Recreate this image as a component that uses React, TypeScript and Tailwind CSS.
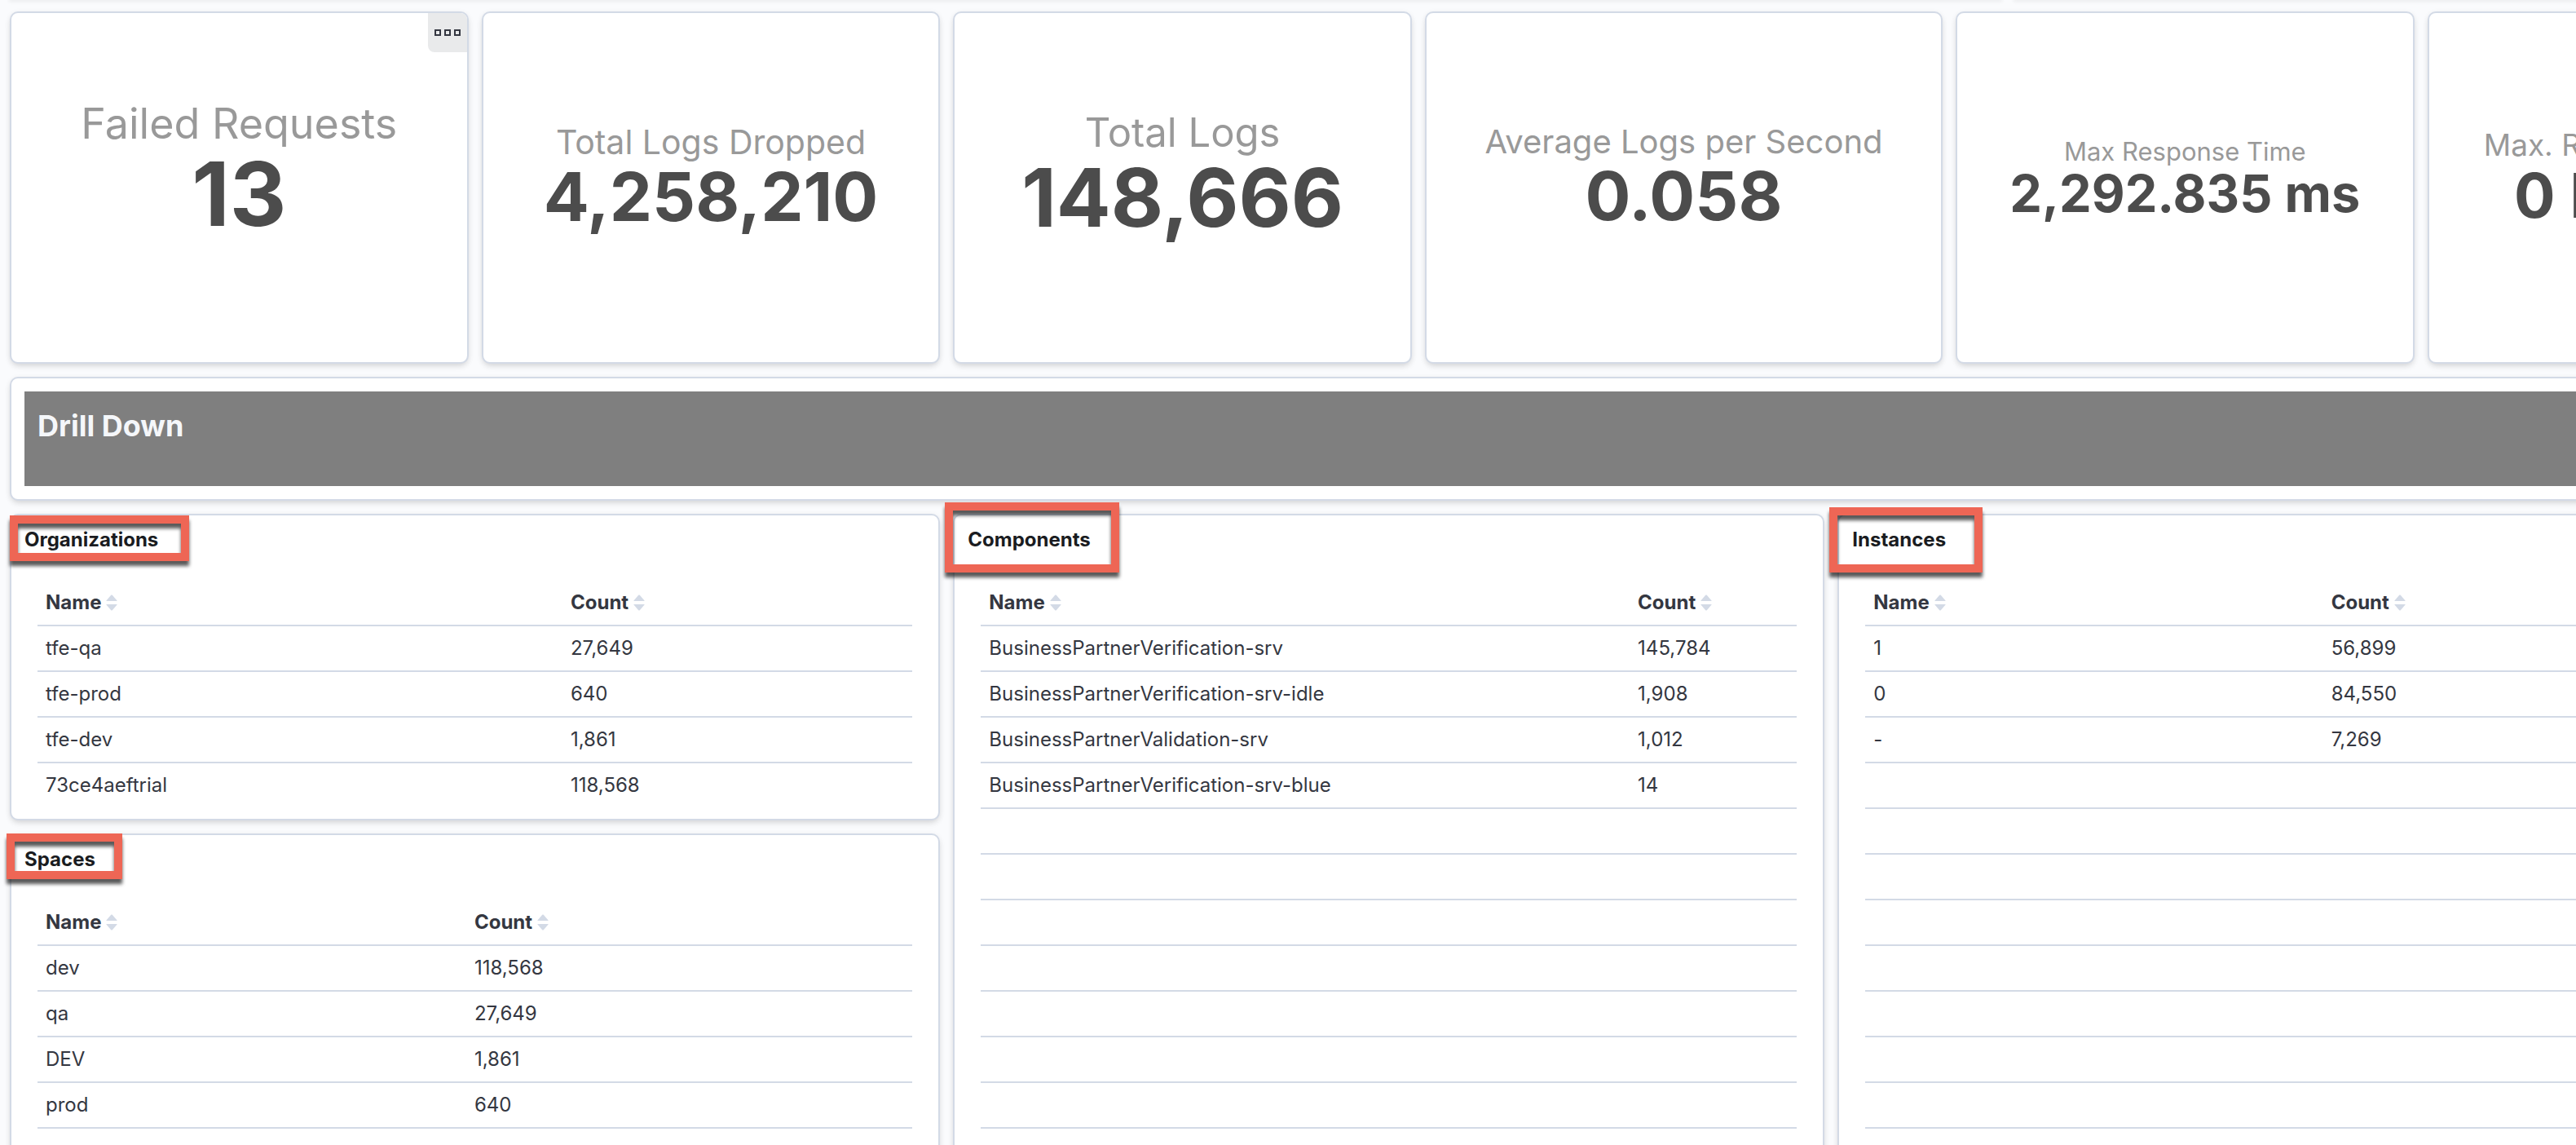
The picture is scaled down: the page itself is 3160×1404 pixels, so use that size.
import type { ReactNode } from "react";

type Metric = {
  label: string;
  value: string;
  span: string;
  labelSize: string;
  valueSize: string;
  lift: string;
  menu?: boolean;
};

const metrics: Metric[] = [
  { label: "Failed Requests", value: "13", span: "col-span-8", labelSize: "text-[52px]", valueSize: "text-[108px]", lift: "pb-[50px]", menu: true },
  { label: "Total Logs Dropped", value: "4,258,210", span: "col-span-8", labelSize: "text-[41px]", valueSize: "text-[83px]", lift: "pb-[28px]" },
  { label: "Total Logs", value: "148,666", span: "col-span-8", labelSize: "text-[49px]", valueSize: "text-[99px]", lift: "pb-[36px]" },
  { label: "Average Logs per Second", value: "0.058", span: "col-span-9", labelSize: "text-[40px]", valueSize: "text-[83px]", lift: "pb-[30px]" },
  { label: "Max Response Time", value: "2,292.835 ms", span: "col-span-8", labelSize: "text-[31px]", valueSize: "text-[63px]", lift: "pb-[24px]" },
  { label: "Max. Response Size", value: "0 Bytes", span: "col-span-7", labelSize: "text-[37px]", valueSize: "text-[75px]", lift: "pb-[28px]" },
];

type Row = [string, string];

const organizations: Row[] = [
  ["tfe-qa", "27,649"],
  ["tfe-prod", "640"],
  ["tfe-dev", "1,861"],
  ["73ce4aeftrial", "118,568"],
];
const spaces: Row[] = [
  ["dev", "118,568"],
  ["qa", "27,649"],
  ["DEV", "1,861"],
  ["prod", "640"],
];
const components: Row[] = [
  ["BusinessPartnerVerification-srv", "145,784"],
  ["BusinessPartnerVerification-srv-idle", "1,908"],
  ["BusinessPartnerValidation-srv", "1,012"],
  ["BusinessPartnerVerification-srv-blue", "14"],
];
const instances: Row[] = [
  ["1", "56,899"],
  ["0", "84,550"],
  ["-", "7,269"],
];

function Panel({ className = "", children }: { className?: string; children?: ReactNode }) {
  return (
    <section
      className={`relative rounded-[10px] border-2 border-[#d3dae6] bg-white shadow-[0_2px_8px_-2px_rgba(0,0,0,0.14),0_5px_8px_-2px_rgba(0,0,0,0.08)] ${className}`}
    >
      {children}
    </section>
  );
}

function MetricPanel({ metric }: { metric: Metric }) {
  return (
    <Panel className={`flex h-[432px] flex-col items-center justify-center whitespace-nowrap ${metric.span} ${metric.lift}`}>
      <div className={`leading-tight text-[#999999] ${metric.labelSize}`}>{metric.label}</div>
      <div className={`leading-none font-bold text-[#4c4c4c] ${metric.valueSize}`}>{metric.value}</div>
      {metric.menu && (
        <button
          type="button"
          aria-label="Panel options"
          className="absolute top-0 right-0 flex size-12 items-center justify-center rounded-tr-lg rounded-bl-lg bg-[#e9eaeb]"
        >
          <svg width="32" height="8" viewBox="0 0 32 8" fill="none" stroke="#343741" strokeWidth="2">
            <rect x="1" y="1" width="6" height="6" />
            <rect x="13" y="1" width="6" height="6" />
            <rect x="25" y="1" width="6" height="6" />
          </svg>
        </button>
      )}
    </Panel>
  );
}

function SortIcon() {
  return (
    <svg width="14" height="20" viewBox="0 0 14 20" fill="#d3dae6" aria-hidden="true">
      <path d="M6.2 .8 .6 7.2c-.4.5-.2.8.4.8h12c.6 0 .8-.3.4-.8L7.8.8c-.5-.5-1.1-.5-1.6 0Z" />
      <path d="M6.2 19.2.6 12.8c-.4-.5-.2-.8.4-.8h12c.6 0 .8.3.4.8l-5.6 6.4c-.5.5-1.1.5-1.6 0Z" />
    </svg>
  );
}

function HeaderCell({ children, className = "" }: { children: ReactNode; className?: string }) {
  return (
    <th scope="col" className={`h-14 border-b-2 border-[#d3dae6] px-2.5 text-left ${className}`}>
      <button type="button" className="flex items-center gap-1.5 font-bold">
        {children}
        <SortIcon />
      </button>
    </th>
  );
}

function Cell({ children }: { children?: ReactNode }) {
  return <td className="h-14 border-b-2 border-[#d3dae6] px-2.5 group-last:border-transparent">{children}</td>;
}

type TablePanelProps = {
  title: string;
  rows: Row[];
  blankRows?: number;
  nameWidth: string;
  highlight: string;
  className?: string;
};

function TablePanel({ title, rows, blankRows = 0, nameWidth, highlight, className = "" }: TablePanelProps) {
  return (
    <Panel className={`pb-3 ${className}`}>
      <div
        aria-hidden="true"
        className={`absolute border-10 border-[#ee6655] drop-shadow-[0_6px_2px_rgba(0,0,0,0.65)] ${highlight}`}
      />
      <h2 className="relative mb-8.5 px-4 pt-3.5 text-2xl leading-8 font-bold text-[#1a1c21]">{title}</h2>
      <div className="px-8">
        <table className="w-full table-fixed border-separate border-spacing-0 text-2xl leading-8 text-[#343741]">
          <thead>
            <tr>
              <HeaderCell className={nameWidth}>Name</HeaderCell>
              <HeaderCell>Count</HeaderCell>
            </tr>
          </thead>
          <tbody>
            {rows.map(([name, count]) => (
              <tr key={name} className="group">
                <Cell>{name}</Cell>
                <Cell>{count}</Cell>
              </tr>
            ))}
            {Array.from({ length: blankRows }, (_, i) => (
              <tr key={i} className="group">
                <Cell />
                <Cell />
              </tr>
            ))}
          </tbody>
        </table>
      </div>
    </Panel>
  );
}

export default function App() {
  return (
    <main className="h-screen overflow-hidden bg-[#fafbfd] font-['Inter',sans-serif]">
      <div className="grid w-[110%] grid-cols-[repeat(48,minmax(0,1fr))] gap-x-4 pr-2 pl-3">
        <div className="col-span-34 shadow-[0_0_5px_1px_rgba(0,0,0,0.14)]" />
        <div className="col-span-14 shadow-[0_0_5px_1px_rgba(0,0,0,0.14)]" />
      </div>
      <div className="grid w-[110%] grid-cols-[repeat(48,minmax(0,1fr))] gap-4 pt-3.5 pr-2 pl-3">
        {metrics.map((metric) => (
          <MetricPanel key={metric.label} metric={metric} />
        ))}

        <Panel className="col-span-48 p-4">
          <div className="h-[116px] bg-[#7f7f7f] px-4 py-5">
            <h1 className="text-4xl leading-11 font-bold text-[#f5f7fa]">Drill Down</h1>
          </div>
        </Panel>

        <div className="col-span-16 flex flex-col gap-4">
          <TablePanel
            title="Organizations"
            rows={organizations}
            nameWidth="w-[60%]"
            highlight="-left-0.5 top-0 h-14 w-[220px]"
          />
          <TablePanel
            title="Spaces"
            rows={spaces}
            blankRows={3}
            nameWidth="w-[49%]"
            highlight="-left-1.5 -top-0.5 h-14 w-[142px]"
          />
        </div>
        <TablePanel
          title="Components"
          rows={components}
          blankRows={10}
          nameWidth="w-[79.5%]"
          highlight="-left-3 -top-4 h-[86px] w-[214px]"
          className="col-span-15"
        />
        <TablePanel
          title="Instances"
          rows={instances}
          blankRows={11}
          nameWidth="w-[49%]"
          highlight="-left-3 -top-2.5 h-20 w-[188px]"
          className="col-span-17"
        />
      </div>
    </main>
  );
}
